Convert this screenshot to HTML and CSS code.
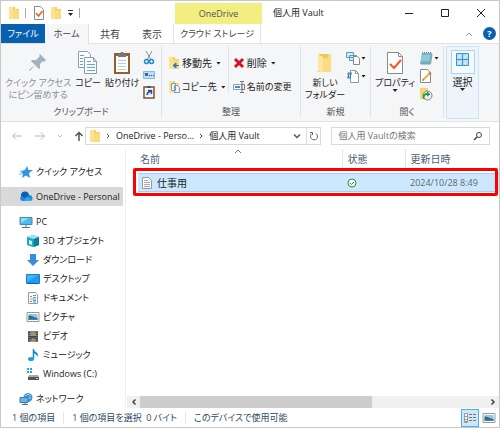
FILE: index.html
```html
<!DOCTYPE html>
<html lang="ja">
<head>
    <meta charset="UTF-8">
    <meta name="viewport" content="width=device-width, initial-scale=1.0">
    <title>個人用 Vault</title>
    <link rel="stylesheet" href="styles.css">
</head>
<body>
    <svg class="sprite" width="0" height="0">
        <symbol id="folder" viewBox="0 0 12 14">
            <path d="M1 1h6v2h4v10H1z" fill="#f3cf63"/>
            <path d="M1 1h4v12H1z" fill="#fbe391"/>
            <path d="M5 4h6v9H5z" fill="#fadb7d"/>
        </symbol>
        <symbol id="check-page" viewBox="0 0 18 24">
            <path d="M1.500 1.500h11l4 4v17h-15z" fill="#fff" stroke="#888"/>
            <path d="M12.500 1.500v4h4" fill="none" stroke="#888"/>
            <path d="M4 13l4 4 7-8" fill="none" stroke="#ee5a24" stroke-width="2"/>
        </symbol>
        <symbol id="picture" viewBox="0 0 14 12">
            <path d="M1 1.500h12v9H1z" fill="#fff" stroke="#999"/>
            <path d="M2.500 3h9v3h-9z" fill="#8cc8ee"/>
            <path d="M2.500 4.500c3 0 5 2 9 2V9h-9z" fill="#2f6a6e"/>
            <path d="M2.500 7.500h9V9h-9z" fill="#3f80b6"/>
        </symbol>
        <symbol id="page" viewBox="0 0 12 14">
            <path d="M1.500 1.500h6l3 3v8h-9z" fill="#fafafa" stroke="#999"/>
            <path d="M3 4.500h4M3 6.500h6M3 8.500h6M3 10.500h6" stroke="#aaa"/>
        </symbol>
    </svg>

    <div class="window">
        <header class="titlebar">
            <div class="quick-tools">
                <svg width="12" height="14"><use href="#folder"/></svg>
                <i class="bar"></i>
                <button aria-label="プロパティ"><svg width="12" height="14" viewBox="0 0 12 14"><path d="M1.500.500h6l3 3v10h-9z" fill="#fff" stroke="#888"/><path d="M3 7l2.500 3L9.500 5" fill="none" stroke="#ee5a24" stroke-width="1.500"/></svg></button>
                <button aria-label="新しいフォルダー"><svg width="12" height="14"><use href="#folder"/></svg></button>
                <button aria-label="カスタマイズ"><svg width="7" height="8" viewBox="0 0 7 8"><path d="M1 1.500h5" stroke="#333"/><path d="M1 4h5L3.500 7z" fill="#222"/></svg></button>
                <i class="bar"></i>
            </div>
            <div class="context-title">OneDrive</div>
            <h1>個人用 Vault</h1>
            <div class="window-buttons">
                <button aria-label="最小化"><svg width="10" height="10"><path d="M1 5.500h8" stroke="#222"/></svg></button>
                <button aria-label="最大化"><svg width="10" height="10"><path d="M1.500 1.500h7v7h-7z" fill="none" stroke="#222"/></svg></button>
                <button aria-label="閉じる"><svg width="10" height="10"><path d="M1 1l8 8M9 1L1 9" stroke="#222"/></svg></button>
            </div>
        </header>

        <nav class="tabs">
            <button class="tab file">ファイル</button>
            <button class="tab active">ホーム</button>
            <button class="tab share">共有</button>
            <button class="tab view">表示</button>
            <button class="tab cloud">クラウド ストレージ</button>
            <div class="tab-tools">
                <button aria-label="リボンを折りたたむ"><svg width="8" height="6"><path d="M1 5l3-3 3 3" fill="none" stroke="#999"/></svg></button>
                <button class="help" aria-label="ヘルプ">?</button>
            </div>
        </nav>

        <section class="ribbon">
            <div class="group clipboard">
                <div class="group-body">
                    <button class="big pin" disabled>
                        <svg width="20" height="24" viewBox="0 0 20 24"><path d="M12 3l6 6-2 2-1-1-3 3 0 4-1 1-4-4-5 6-1-1 6-5-4-4 1-1 4 0 4-4-1-1z" fill="#a3b1c4"/></svg>
                        <span>クイック アクセス<br>にピン留めする</span>
                    </button>
                    <button class="big">
                        <svg width="20" height="24" viewBox="0 0 20 24"><g fill="#fff" stroke="#8b9bb0"><path d="M.5.500h9l3 3v13H.5z"/><path d="M6.500 6.500h9l3 4v12h-12z"/><path d="M15.500 6.500v4h3" fill="none"/></g><path d="M2 4.500h4M2 7.500h3M2 10.500h3M2 13.500h3M9 10.500h4M9 13.500h8M9 16.500h8M9 19.500h8" stroke="#58a7e5"/></svg>
                        <span>コピー</span>
                    </button>
                    <button class="big">
                        <svg width="18" height="24" viewBox="0 0 18 24"><path d="M1 2h16v21H1z" fill="#94602f"/><path d="M3 5h12v16H3z" fill="#fff"/><path d="M5 3h2l1-2h2l1 2h2v3H5z" fill="#777"/><path d="M5 9.500h8M5 12.500h8M5 15.500h8M5 18.500h8" stroke="#b7cddf"/></svg>
                        <span>貼り付け</span>
                    </button>
                    <div class="small-icons">
                        <button aria-label="切り取り"><svg width="12" height="14" viewBox="0 0 12 14"><path d="M3 0l5 9M9 0L4 9" stroke="#8b9096"/><g fill="none" stroke="#2488c9" stroke-width="1.500"><circle cx="3.500" cy="10.500" r="2"/><circle cx="8.500" cy="10.500" r="2"/></g></svg></button>
                        <button aria-label="パスのコピー"><svg width="12" height="8" viewBox="0 0 12 8"><path d="M.5.500h11v7H.5z" fill="#b9def5" stroke="#82bde2"/><path d="M2 2l1 3 1-3 1 3M6 4.500h1M8 4.500h1M10 4.500h1" fill="none" stroke="#31577a"/></svg></button>
                        <button aria-label="ショートカットの貼り付け"><svg width="12" height="14" viewBox="0 0 12 14"><path d="M1 2h10v11H1z" fill="#fff" stroke="#7c5132" stroke-width="1.500"/><path d="M4 1h4v2H4z" fill="#555"/><path d="M3 5h6v6H3z" fill="#dcecf9"/><path d="M4 10c0-2 1-3 4-4M5 5.500h3.500V9" fill="none" stroke="#1f4f93" stroke-width="1.500"/></svg></button>
                    </div>
                </div>
                <p class="group-name">クリップボード</p>
            </div>

            <div class="group organize">
                <div class="group-body">
                    <div class="row-buttons">
                        <button><svg width="12" height="14" viewBox="0 0 12 14"><use href="#folder"/><path d="M11 9.500H6M8 7l-3 2.500L8 12z" fill="#2879c5" stroke="#2879c5"/></svg>移動先<i class="caret"></i></button>
                        <button><svg width="12" height="14" viewBox="0 0 12 14"><use href="#folder"/><path d="M3.500 3.500h4v7h-4zM6.500 5.500h3l2 2v5h-5z" fill="#eef6fd" stroke="#7d9bb8"/></svg><span class="kana">コピー先</span><i class="caret"></i></button>
                    </div>
                    <div class="row-buttons divided">
                        <button><svg width="12" height="12"><path d="M2 2l8 8M10 2l-8 8" stroke="#d31420" stroke-width="3"/></svg>削除<i class="caret"></i></button>
                        <button><svg width="12" height="12" viewBox="0 0 12 12"><path d="M.5 3.500h8v5h-8z" fill="#fff" stroke="#8b9db0"/><path d="M2 5h5v2H2z" fill="#3294dc"/><path d="M7 .5h4M7 11.500h4M9 .5v11M9 3.500h2.500v5H9" fill="none" stroke="#777"/></svg><span class="kana">名前の変更</span></button>
                    </div>
                </div>
                <p class="group-name">整理</p>
            </div>

            <div class="group new">
                <div class="group-body">
                    <button class="big">
                        <svg width="18" height="24" viewBox="0 0 18 24"><path d="M2 3h10v3h3v15H2z" fill="#f1c65b"/><path d="M2 3l5 3v16l-5-2z" fill="#fde79e"/><path d="M7 7h5v-4h3v18H7z" fill="#fbdc84"/></svg>
                        <span>新しい<br>フォルダー</span>
                    </button>
                    <div class="small-icons">
                        <button aria-label="新しいアイテム"><svg width="14" height="14" viewBox="0 0 14 14"><path d="M.5 1.500h7v5h-7zM3.500 4.500h7v5h-7z" fill="#d3ebf8" stroke="#5a9dc1"/><path d="M7.500 5.500h4l2 2v6h-6z" fill="#fff" stroke="#888"/></svg><i class="caret"></i></button>
                        <button aria-label="ショートカット"><svg width="14" height="14" viewBox="0 0 14 14"><path d="M4.500 1.500h5l3 3v9h-8z" fill="#fff" stroke="#999"/><path d="M9.500 1.500v3h3" fill="none" stroke="#999"/><path d="M1 5h5M1 8h4M5 3L4 10M3 3L2 10" stroke="#317fc1"/></svg><i class="caret"></i></button>
                    </div>
                </div>
                <p class="group-name">新規</p>
            </div>

            <div class="group open">
                <div class="group-body">
                    <button class="big">
                        <svg width="18" height="24"><use href="#check-page"/></svg>
                        <span>プロパティ</span>
                        <i class="caret"></i>
                    </button>
                    <div class="small-icons">
                        <button aria-label="開く"><svg width="14" height="14" viewBox="0 0 14 14"><path d="M3 2h10l-2 11H1z" fill="#6fb4c7"/><path d="M3 5h8M2.500 7h8M2 9h8" stroke="#b5dde8"/><path d="M3 1.500h10" stroke="#777" stroke-dasharray="1 1"/><path d="M13 3l-1.500 10H2" fill="none" stroke="#899"/></svg><i class="caret"></i></button>
                        <button aria-label="編集"><svg width="14" height="14" viewBox="0 0 14 14"><path d="M1.500.500h7l3 3v10h-10z" fill="#fff" stroke="#888"/><path d="M4 11l7-7" stroke="#e7b534" stroke-width="2"/><path d="M3 12l1-2 1 1z" fill="#554"/><path d="M10 3.500l2 2" stroke="#d9755f" stroke-width="2"/></svg></button>
                        <button aria-label="履歴"><svg width="14" height="14" viewBox="0 0 14 14"><path d="M1 1h8v11H1z" fill="#f6d571"/><circle cx="8.500" cy="8.500" r="4.500" fill="#eee" stroke="#788"/><path d="M8 9l3-2" stroke="#555"/><path d="M4 12c-1-4 1-6 4-6V4l3 3-3 2V8C6 8 5 9 6 12z" fill="#2e9c49"/></svg></button>
                    </div>
                </div>
                <p class="group-name">開く</p>
            </div>

            <div class="group select">
                <button class="big">
                    <svg width="24" height="24" viewBox="0 0 24 24"><path d="M.5.500h23v23H.5z" fill="#f5faff" stroke="#a9d2f3"/><path d="M5.500 3.500h12v12h-12z" fill="#b9e0fb" stroke="#3a93d8"/><path d="M11.500 3.500v12M5.500 9.500h12" stroke="#3a93d8"/><path d="M7 8l3-3M13 8l3-3M7 14l3-3M13 14l3-3" stroke="#e4f5ff"/></svg>
                    <span>選択</span>
                    <i class="caret"></i>
                </button>
            </div>
        </section>

        <div class="address-row">
            <div class="nav-buttons">
                <button aria-label="戻る"><svg width="12" height="10"><path d="M11 5H2M5 1.500L1.500 5 5 8.500" fill="none" stroke="#b8b8b8"/></svg></button>
                <button aria-label="進む"><svg width="12" height="10"><path d="M1 5h9M7 1.500L10.500 5 7 8.500" fill="none" stroke="#b8b8b8"/></svg></button>
                <button aria-label="最近表示した場所"><svg width="6" height="10"><path d="M1 4l2 2 2-2" fill="none" stroke="#bbb"/></svg></button>
                <button aria-label="上へ"><svg width="10" height="10"><path d="M5 10V1.500M1.500 5L5 1.500 8.500 5" fill="none" stroke="#555" stroke-width="1.500"/></svg></button>
            </div>
            <div class="address">
                <svg width="12" height="14"><use href="#folder"/></svg>
                <svg width="5" height="8"><path d="M1 2l2 2-2 2" fill="none" stroke="#555"/></svg>
                <a href="#">OneDrive - Perso...</a>
                <svg width="5" height="8"><path d="M1 2l2 2-2 2" fill="none" stroke="#555"/></svg>
                <a href="#">個人用 Vault</a>
                <button class="history" aria-label="履歴"><svg width="8" height="8"><path d="M1 2.500l3 3 3-3" fill="none" stroke="#555" stroke-width="1.500"/></svg></button>
                <button class="refresh" aria-label="最新の情報に更新"><svg width="10" height="10"><path d="M7 2.500a3.500 3.500 0 1 1-4 0M1 1.500h2.500V4" fill="none" stroke="#666"/></svg></button>
            </div>
            <label class="search">
                <input type="search" placeholder="個人用 Vaultの検索" aria-label="個人用 Vaultの検索">
                <svg width="10" height="10"><circle cx="6" cy="4" r="2.500" fill="none" stroke="#444"/><path d="M4 6L1 9" stroke="#444" stroke-width="1.500"/></svg>
            </label>
        </div>

        <div class="content">
            <nav class="sidebar">
                <ul>
                    <li><a href="#"><svg width="14" height="14" viewBox="0 0 14 14"><path d="M8 1l1.500 4H14l-4 3 1 5-4-2.500L3 13l1-4-3-3 5-1z" fill="#3095dd"/><path d="M1 6.500h3M0 9h3" stroke="#79bdf0"/></svg>クイック アクセス</a></li>
                </ul>
                <ul>
                    <li><a href="#" class="current"><svg width="14" height="14" viewBox="0 0 14 14"><path d="M3 11a3 3 0 0 1 0-5.500A4 4 0 0 1 10 5a3 3 0 0 1 1 6z" fill="#1e8bdc"/><path d="M2 6a4 4 0 0 1 8-1L6 8z" fill="#0d5eb2"/><path d="M5 11l3-4 5 3-2 1z" fill="#2fa6f0"/></svg>OneDrive - Personal</a></li>
                </ul>
                <ul>
                    <li><a href="#"><svg width="14" height="14" viewBox="0 0 14 14"><path d="M1 2.500h12v7H1z" fill="#52b9ef" stroke="#4b86ad"/><path d="M2 8l8-5H2z" fill="#8ddcff"/><path d="M3 12.500h8M7 10v2" stroke="#577b94"/></svg>PC</a></li>
                    <li class="sub"><a href="#"><svg width="14" height="14" viewBox="0 0 14 14"><path d="M1 3l6-2 6 2v8l-6 2-6-2z" fill="#23a5bd"/><path d="M1 3l6-2 6 2-5 2z" fill="#9ce8ef"/><path d="M8 5l5-2v8l-5 2z" fill="#087e9b"/><path d="M3 6l3 1v4l-3-1z" fill="#c6f2f5"/></svg>3D オブジェクト</a></li>
                    <li class="sub"><a href="#"><svg width="14" height="14" viewBox="0 0 14 14"><path d="M4 1h6v6h3l-6 6-6-6h3z" fill="#358ee0"/></svg>ダウンロード</a></li>
                    <li class="sub"><a href="#"><svg width="14" height="14" viewBox="0 0 14 14"><path d="M.5 2.500h13v9H.5z" fill="#1b9cf2" stroke="#1681d0"/><path d="M1 10l11-7H1z" fill="#42b4fb"/><path d="M2 11.500h10" stroke="#0b5fa3"/></svg>デスクトップ</a></li>
                    <li class="sub"><a href="#"><svg width="14" height="14" viewBox="0 0 14 14"><path d="M2.500 1.500h7l2 2v9h-9z" fill="#fff" stroke="#999"/><path d="M4 5.500h2M7 4.500h3M7 6.500h3M4 10.500h2M7 9.500h3M7 11h3" stroke="#409bd2"/><path d="M4 8h6" stroke="#999"/></svg>ドキュメント</a></li>
                    <li class="sub"><a href="#"><svg width="14" height="12"><use href="#picture"/></svg>ピクチャ</a></li>
                    <li class="sub"><a href="#"><svg width="14" height="14" viewBox="0 0 14 14"><path d="M2 2h10v11H2z" fill="#444"/><path d="M4 2h6v5H4z" fill="#578fbd"/><path d="M4 8h6v5H4z" fill="#385f94"/><path d="M4 6l3-3 3 2v2H4zM4 12l3-3 3 2v2H4z" fill="#b98c52"/><path d="M3 2v11M11 2v11" stroke="#aaa" stroke-dasharray="1 1"/></svg>ビデオ</a></li>
                    <li class="sub"><a href="#"><svg width="14" height="14" viewBox="0 0 14 14"><path d="M7.500 1v10" stroke="#1686d9" stroke-width="1.500"/><path d="M7 1c1 3 6 3 5 8-1-2-2-3-5-4z" fill="#1686d9"/><ellipse cx="5" cy="11" rx="3" ry="2" fill="#239be9"/></svg>ミュージック</a></li>
                    <li class="sub"><a href="#"><svg width="14" height="14" viewBox="0 0 14 14"><path d="M1 1h2v2H1zM4 1h2v2H4zM1 4h2v2H1zM4 4h2v2H4z" fill="#26a1e6"/><path d="M3 8h9l1 2v3H2v-3z" fill="#aaa"/><path d="M2 10h11v3H2z" fill="#555"/><path d="M10 11.500h2" stroke="#9de79b"/></svg>Windows (C:)</a></li>
                </ul>
                <ul>
                    <li><a href="#"><svg width="14" height="14" viewBox="0 0 14 14"><circle cx="9" cy="5.500" r="4.500" fill="#4593ce"/><path d="M6 4l3-2 3 2M6 6h6" stroke="#a5d9f4" fill="none"/><path d="M1 5.500h8v5H1z" fill="#5fb8e6" stroke="#3b7da9"/><path d="M3 12.500h6M6 11v1" stroke="#54748a"/></svg>ネットワーク</a></li>
                </ul>
            </nav>

            <main class="files">
                <svg class="sort" width="8" height="5"><path d="M1 4l3-3 3 3" fill="none" stroke="#777"/></svg>
                <table>
                    <thead>
                        <tr><th class="name">名前</th><th class="state">状態</th><th class="date">更新日時</th></tr>
                    </thead>
                    <tbody>
                        <tr>
                            <td><span class="file-name"><svg width="12" height="14"><use href="#page"/></svg>仕事用</span></td>
                            <td><svg width="10" height="10"><circle cx="5" cy="5" r="4" fill="#fff" stroke="#20933c"/><path d="M3 5l1.500 1.500L7 4" fill="none" stroke="#20933c"/></svg></td>
                            <td class="time">2024/10/28 8:49</td>
                        </tr>
                    </tbody>
                </table>
                <div class="highlight"></div>
                <div class="scrollbar">
                    <button aria-label="左へ"><svg width="6" height="8"><path d="M4.500 1.500L2 4l2.500 2.500" fill="none" stroke="#444" stroke-width="1.500"/></svg></button>
                    <div class="track"><div class="thumb"></div></div>
                    <button aria-label="右へ"><svg width="6" height="8"><path d="M1.500 1.500L4 4 1.500 6.500" fill="none" stroke="#444" stroke-width="1.500"/></svg></button>
                </div>
            </main>
        </div>

        <footer class="status">
            <span>1 個の項目</span>
            <span>1 個の項目を選択&ensp;0 バイト</span>
            <span>このデバイスで使用可能</span>
            <div class="view-buttons">
                <button class="on" aria-label="詳細"><svg width="14" height="12"><path d="M1.500 1.500h3v9h-3zM1.500 4.500h3M1.500 7.500h3" fill="#fff" stroke="#999"/><path d="M6 2.500h3M10 2.500h3M6 5.500h3M10 5.500h3M6 8.500h3M10 8.500h3" stroke="#777"/><path d="M2 9.500h2" stroke="#d66"/></svg></button>
                <button aria-label="大アイコン"><svg width="14" height="12"><use href="#picture"/></svg></button>
            </div>
        </footer>
    </div>
</body>
</html>
```

FILE: styles.css
```css
* {
    box-sizing: border-box;
}
body {
    margin: 0;
    font-family: "Open Sans", "Noto Sans CJK JP", sans-serif;
    font-size: 9px;
    line-height: 12px;
    font-feature-settings: "palt";
    color: #222;
    background: #fff;
}
button, input {
    font: inherit;
    font-feature-settings: inherit;
    color: inherit;
    border: none;
    background: none;
    padding: 0;
    margin: 0;
}
button {
    display: flex;
    align-items: center;
    justify-content: center;
    white-space: nowrap;
}
a {
    color: inherit;
    text-decoration: none;
    white-space: nowrap;
}
svg {
    display: block;
    flex: none;
}
.sprite {
    position: absolute;
}
.window {
    display: flex;
    flex-direction: column;
    min-height: 100vh;
    border: 1px solid #c8c8c8;
}

/* title bar */
.titlebar {
    display: flex;
    height: 23px;
}
.quick-tools {
    display: flex;
    align-items: center;
    gap: 5px;
    width: 174px;
    padding-left: 7px;
}
.bar {
    width: 1px;
    height: 10px;
    margin: 0 2px 0 0;
    background: #aaa;
}
.context-title {
    width: 87px;
    margin-top: 2px;
    padding-top: 5px;
    text-align: center;
    background: #f1ee82;
    color: #555;
}
h1 {
    margin: 0;
    padding: 6px 0 0 11px;
    font-size: 9px;
    font-weight: normal;
    white-space: nowrap;
}
.window-buttons {
    display: flex;
    align-items: center;
    gap: 26px;
    margin-left: auto;
    padding-right: 13px;
}

/* tabs */
.tabs {
    display: flex;
    height: 20px;
    border-bottom: 1px solid #e0e2e5;
}
.tab {
    color: #444;
}
.tab.file {
    width: 44px;
    background: #0a60b0;
    color: #fff;
}
.tab.active {
    width: 44px;
    margin-bottom: -1px;
    border-right: 1px solid #e0e2e5;
    background: #f5f6f7;
}
.tab.share,
.tab.view {
    width: 42px;
    font-size: 10px;
}
.tab.cloud {
    width: 88px;
    border-left: 1px solid #e4e4e4;
    border-right: 1px solid #e4e4e4;
}
.tab-tools {
    display: flex;
    align-items: center;
    gap: 10px;
    margin-left: auto;
    padding-right: 3px;
}
.help {
    width: 13px;
    height: 13px;
    border-radius: 50%;
    background: #0a60b0;
    color: #fff;
    font-weight: bold;
}

/* ribbon */
.ribbon {
    display: grid;
    grid-template-columns: 161fr 139fr 70fr 73fr 55fr;
    height: 78px;
    background: #f5f6f7;
    border-bottom: 1px solid #e0e2e5;
}
.group {
    display: flex;
    flex-direction: column;
    min-width: 0;
    padding: 2px 0 3px;
}
.group-body {
    display: flex;
    flex: 1;
    align-items: flex-start;
    border-right: 1px solid #e2e3e4;
}
.group-name {
    margin: 0;
    text-align: center;
    color: #555;
    border-right: 1px solid #e2e3e4;
}
.big {
    flex-direction: column;
    padding-top: 5px;
}
.big span {
    padding-top: 2px;
}
.big .caret {
    margin: 0;
}
.caret {
    width: 5px;
    height: 3px;
    margin-left: 2px;
    background: #222;
    clip-path: polygon(0 0, 100% 0, 50% 100%);
}
.small-icons {
    display: flex;
    flex-direction: column;
    align-items: flex-start;
    gap: 4px;
    padding-top: 5px;
}
.small-icons .caret {
    margin-left: 1px;
}
.clipboard .group-body {
    gap: 4px;
    padding-left: 4px;
}
.clipboard .small-icons {
    gap: 6px;
}
.pin {
    color: #8a8f96;
}
.organize .group-body {
    padding-left: 6px;
}
.organize,
.select {
    font-size: 10px;
}
.organize .group-name,
.kana {
    font-size: 9px;
}
.row-buttons {
    display: flex;
    flex-direction: column;
    align-items: flex-start;
    gap: 10px;
    padding: 10px 2px 0 0;
}
.row-buttons button {
    gap: 2px;
    height: 14px;
}
.row-buttons.divided {
    padding-left: 4px;
    border-left: 1px solid #e2e3e4;
}
.new .group-body,
.open .group-body {
    justify-content: space-between;
    padding: 0 4px;
}
.select {
    padding: 2px 20px 2px 2px;
}
.select .big {
    flex: 1;
    justify-content: flex-start;
    padding-top: 3px;
    border: 1px solid #cbe3f6;
    background: #edf4fa;
}

/* address row */
.address-row {
    display: flex;
    align-items: center;
    gap: 10px;
    height: 27px;
    padding: 0 9px 0 10px;
}
.nav-buttons {
    display: flex;
    flex: none;
    align-items: center;
    gap: 11px;
    width: 64px;
}
.address {
    display: flex;
    flex: 8 1 0;
    align-items: center;
    gap: 5px;
    height: 18px;
    padding-left: 3px;
    border: 1px solid #d9d9d9;
}
.history {
    margin-left: auto;
}
.refresh {
    align-self: stretch;
    width: 14px;
    border-left: 1px solid #d9d9d9;
}
.search {
    display: flex;
    flex: 5 1 0;
    align-items: center;
    height: 18px;
    padding: 0 6px;
    border: 1px solid #d9d9d9;
}
.search input {
    flex: 1;
    min-width: 0;
    outline: none;
    appearance: none;
}
.search input::placeholder {
    color: #767676;
    opacity: 1;
}

/* content */
.content {
    display: flex;
    flex: 1;
}
.sidebar {
    width: 125px;
    padding: 13px 2px 0 0;
    border-right: 1px solid #efefef;
}
.sidebar ul {
    list-style: none;
    margin: 0 0 6px;
    padding: 0;
}
.sidebar ul:last-child {
    margin-bottom: 0;
}
.sidebar a {
    display: flex;
    align-items: center;
    gap: 3px;
    height: 19px;
    padding-left: 18px;
}
.sidebar .sub a {
    padding-left: 25px;
}
.sidebar .current {
    background: #d9d9d9;
}
.files {
    position: relative;
    display: flex;
    flex: 1;
    flex-direction: column;
    padding-left: 12px;
}
.sort {
    position: absolute;
    top: 0;
    left: 108px;
}
table {
    width: 100%;
    border-collapse: collapse;
    table-layout: fixed;
}
th {
    height: 19px;
    padding: 0 0 0 5px;
    text-align: left;
    font-size: 10px;
    font-weight: normal;
    color: #4c607a;
    border-left: 1px solid #e5e5e5;
}
th.name {
    padding-left: 2px;
    border-left: none;
}
th.state {
    width: 63px;
}
th.date {
    width: 94px;
}
tbody::before {
    content: "";
    display: block;
    height: 5px;
}
td {
    height: 18px;
    padding: 0 0 0 5px;
    background: #cce8ff;
    border-top: 1px solid #99d1ff;
    border-bottom: 1px solid #99d1ff;
}
td:first-child {
    padding-left: 3px;
}
.file-name {
    display: flex;
    align-items: center;
    gap: 4px;
    font-size: 10px;
}
.time {
    color: #666;
    white-space: nowrap;
}
.highlight {
    position: absolute;
    top: 19px;
    left: 7px;
    right: 1px;
    height: 28px;
    border: 3px solid #f00;
    border-radius: 2px;
}
.scrollbar {
    display: flex;
    height: 12px;
    margin: auto 0 0 -11px;
    background: #f0f0f0;
}
.scrollbar button {
    width: 13px;
}
.track {
    flex: 1;
}
.thumb {
    width: 67%;
    height: 100%;
    background: #cdcdcd;
}

/* status bar */
.status {
    display: flex;
    align-items: center;
    height: 19px;
    padding-left: 11px;
    color: #2c4a66;
}
.status span {
    padding-right: 8px;
    margin-right: 8px;
    border-right: 1px solid #e5e5e5;
    white-space: nowrap;
}
.status span:last-of-type {
    border-right: none;
}
.view-buttons {
    display: flex;
    gap: 1px;
    margin-left: auto;
    padding-right: 1px;
}
.view-buttons button {
    width: 18px;
    height: 18px;
}
.view-buttons .on {
    border: 1px solid #4db1e2;
    background: #cce8f7;
}
```
